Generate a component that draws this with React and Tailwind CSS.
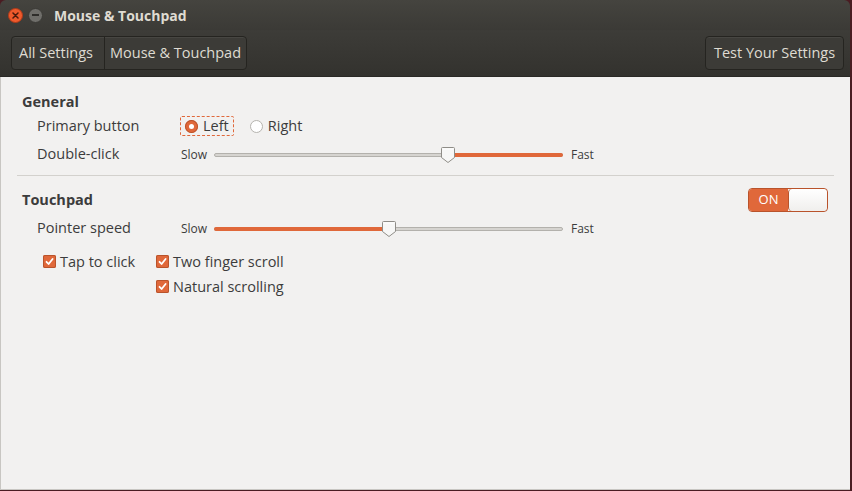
import React, { useState } from 'react';

const ORANGE = '#e0683a';

function Knob() {
  return (
    <svg width="15" height="18" viewBox="0 0 15 18" className="absolute top-1/2 -translate-x-1/2 -translate-y-1/2">
      <path d="M2 1.5 H13 Q14 1.5 14 2.5 V11.5 L7.5 16.5 L1 11.5 V2.5 Q1 1.5 2 1.5 Z" fill="#f7f7f6" stroke="#8f8d88" strokeWidth="1" />
      <path d="M2.2 3 H12.8" stroke="#ffffff" strokeWidth="1" />
    </svg>
  );
}

function Slider({ value, fillRight }) {
  return (
    <div className="flex items-center text-[12px] text-[#3c3c3c] mt-[2px]">
      <span className="w-[34px] pl-px">Slow</span>
      <div className="relative w-[349px] h-[18px]">
        <div className="absolute left-0 right-0 top-[7px] h-[4px] rounded-full bg-[#d6d4d0] border border-[#b3b1ac]" />
        <div
          className="absolute top-[7px] h-[4px] rounded-full"
          style={fillRight
            ? { left: `${value}%`, right: 0, background: ORANGE }
            : { left: 0, width: `${value}%`, background: ORANGE }}
        />
        <div className="absolute top-0 h-full" style={{ left: `${value}%` }}>
          <Knob />
        </div>
      </div>
      <span className="pl-2">Fast</span>
    </div>
  );
}

function Radio({ checked, label, focused }) {
  return (
    <div className={`flex items-center gap-[5px] h-[20px] px-[4px] ${focused ? 'border border-dashed border-[#e0683a] rounded-[2px]' : 'border border-transparent'}`}>
      {checked ? (
        <span className="w-[13px] h-[13px] rounded-full flex items-center justify-center" style={{ background: ORANGE, boxShadow: 'inset 0 0 0 1px #b9532b' }}>
          <span className="w-[5px] h-[5px] rounded-full bg-white" />
        </span>
      ) : (
        <span className="w-[13px] h-[13px] rounded-full bg-white border border-[#b5b3ae]" />
      )}
      <span>{label}</span>
    </div>
  );
}

function Check({ label }) {
  return (
    <div className="flex items-center gap-[4px]">
      <span className="w-[13px] h-[13px] rounded-[2px] flex items-center justify-center" style={{ background: ORANGE, boxShadow: 'inset 0 0 0 1px #b9532b' }}>
        <svg width="9" height="9" viewBox="0 0 9 9">
          <path d="M1.5 4.8 L3.6 7 L7.6 2" fill="none" stroke="white" strokeWidth="1.8" strokeLinecap="round" strokeLinejoin="round" />
        </svg>
      </span>
      <span>{label}</span>
    </div>
  );
}

function ToolButton({ children, className = '' }) {
  return (
    <div className={`h-[32px] flex items-center px-[7px] whitespace-nowrap text-[#dfdbd2] ${className}`}>{children}</div>
  );
}

export default function App() {
  const [touchpadOn] = useState(true);

  return (
    <div className="w-[852px] h-[491px] bg-[#4a1c22] overflow-hidden" style={{ fontFamily: '"Open Sans", "Noto Sans", sans-serif' }}>
      <div className="w-[850px] h-[490px] flex flex-col rounded-t-[6px] overflow-hidden">
        {/* title bar */}
        <div className="h-[30px] flex items-center bg-gradient-to-b from-[#45443f] to-[#3b3a36]">
          <span className="ml-[8px] w-[15px] h-[15px] rounded-full flex items-center justify-center bg-[#ef5a2c] border border-[#b03a18]">
            <svg width="7" height="7" viewBox="0 0 7 7">
              <path d="M1 1 L6 6 M6 1 L1 6" stroke="#4a1a0c" strokeWidth="1.5" strokeLinecap="round" />
            </svg>
          </span>
          <span className="ml-[5px] w-[15px] h-[15px] rounded-full flex items-center justify-center bg-[#6f6e6a] border border-[#3a3935]">
            <span className="w-[7px] h-[1.5px] bg-[#2e2d2a]" />
          </span>
          <span className="ml-[11px] text-[14px] font-bold text-[#dfdbd2]">Mouse &amp; Touchpad</span>
        </div>

        {/* toolbar */}
        <div className="h-[47px] flex items-center justify-between px-[11px] bg-gradient-to-b from-[#3d3c38] to-[#33322e] border-b border-[#2a2926]">
          <div className="flex text-[14.5px] rounded-[4px] border border-[#252420] bg-[#3c3b37] shadow-[inset_0_1px_0_rgba(255,255,255,0.06)]">
            <ToolButton className="w-[93px] border-r border-[#252420]">All Settings</ToolButton>
            <ToolButton className="w-[141px] justify-center px-0">Mouse &amp; Touchpad</ToolButton>
          </div>
          <div className="text-[14.5px] rounded-[4px] border border-[#252420] bg-[#3c3b37] shadow-[inset_0_1px_0_rgba(255,255,255,0.06)] mr-[-5px]">
            <ToolButton className="w-[137px] justify-center px-0">Test Your Settings</ToolButton>
          </div>
        </div>

        {/* content */}
        <div className="flex-1 bg-[#f2f1f0] border-l border-b border-[#c8c6c2] px-[16px] pt-[15px] text-[14.5px] text-[#3c3c3c]">
          <div className="h-[20px] flex items-center pl-[5px] font-bold">General</div>

          <div className="h-[28px] flex items-center pl-[20px]">
            <span className="w-[143px]">Primary button</span>
            <div className="flex items-center gap-[11px]">
              <Radio checked focused label="Left" />
              <Radio label="Right" />
            </div>
          </div>

          <div className="h-[28px] flex items-center pl-[20px]">
            <span className="w-[143px]">Double-click</span>
            <Slider value={67} fillRight />
          </div>

          <div className="mt-[7px] h-px bg-[#d3d1cd]" />

          <div className="mt-[10px] h-[28px] flex items-center justify-between pl-[5px] pr-[6px]">
            <span className="font-bold">Touchpad</span>
            <div className="flex w-[80px] h-[24px] rounded-[4px] border border-[#b9532b] overflow-hidden">
              <div className="flex-1 flex items-center justify-center text-white text-[13px]" style={{ background: ORANGE }}>
                {touchpadOn ? 'ON' : 'OFF'}
              </div>
              <div className="w-[39px] rounded-[4px] bg-gradient-to-b from-white to-[#f0efed] border-l border-[#b9532b]" />
            </div>
          </div>

          <div className="h-[28px] flex items-center pl-[20px]">
            <span className="w-[143px]">Pointer speed</span>
            <Slider value={50} />
          </div>

          <div className="mt-[7px] pl-[26px] flex">
            <div className="w-[113px] h-[25px] flex items-center">
              <Check label="Tap to click" />
            </div>
            <div className="flex flex-col">
              <div className="h-[25px] flex items-center"><Check label="Two finger scroll" /></div>
              <div className="h-[25px] flex items-center"><Check label="Natural scrolling" /></div>
            </div>
          </div>
        </div>
      </div>
    </div>
  );
}
